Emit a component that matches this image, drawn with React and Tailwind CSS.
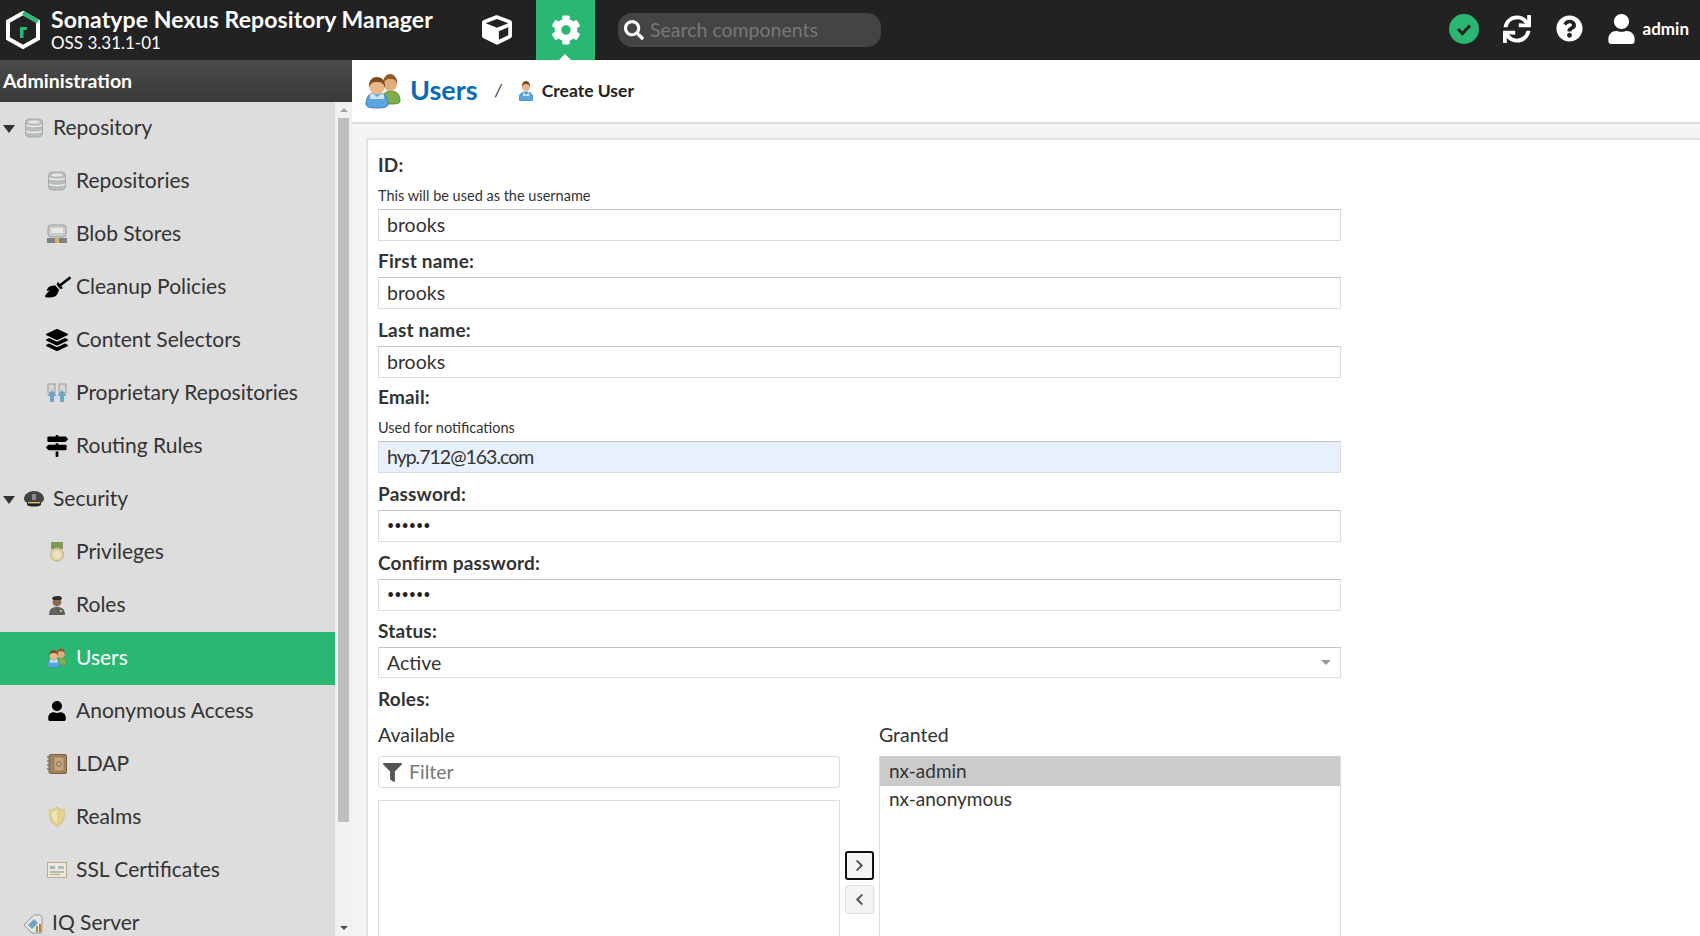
import React from "react";
import {
  FaCube,
  FaCog,
  FaSearch,
  FaSync,
  FaQuestionCircle,
  FaUser,
  FaBroom,
  FaLayerGroup,
  FaMapSigns,
  FaFilter,
  FaChevronRight,
  FaChevronLeft,
} from "react-icons/fa";

const Db = () => (
  <svg viewBox="0 0 18 20" className="w-[18px] h-[20px]">
    <rect x="0.5" y="1" width="17" height="18" rx="4" fill="#b9bcbc" stroke="#a5a8a8" />
    <path d="M1 7c3 2 13 2 16 0M1 13c3 2 13 2 16 0" stroke="#f0f0f0" strokeWidth="1.4" fill="none" />
    <ellipse cx="9" cy="4" rx="6" ry="1.6" fill="#e4e6e6" />
  </svg>
);

const BlobIcon = () => (
  <svg viewBox="0 0 20 20" className="w-[20px] h-[20px]">
    <rect x="1" y="1" width="18" height="12" rx="3" fill="#c9cbcb" stroke="#9a9d9d" />
    <rect x="4" y="4" width="12" height="5" fill="#e6e7e7" />
    <rect x="0" y="14" width="20" height="5" fill="#7d8080" />
    <rect x="8" y="14" width="4" height="5" fill="#d9b26a" />
  </svg>
);

const ProprietaryIcon = () => (
  <svg viewBox="0 0 20 20" className="w-[20px] h-[20px]">
    <rect x="1" y="1" width="7" height="9" fill="#d5d5d5" stroke="#9a9a9a" />
    <rect x="12" y="1" width="7" height="9" fill="#d5d5d5" stroke="#9a9a9a" />
    <path d="M5 7l4.500 6h-2.500v6h-4v-6H0.500z" fill="#6fa3c4" />
    <path d="M15 7l4.500 6h-2.500v6h-4v-6h-2.500z" fill="#6fa3c4" />
  </svg>
);

const CapIcon = () => (
  <svg viewBox="0 0 20 16" className="w-[20px] h-[16px]">
    <path d="M0 8c0-5 5-8 10-8s10 3 10 8c0 3-4 5-10 5S0 11 0 8z" fill="#444" />
    <rect x="8" y="3" width="4" height="6" rx="1" fill="#8d8d8d" />
    <path d="M3 12h14v2c-3 2-11 2-14 0z" fill="#1e1e1e" />
    <rect x="4" y="11" width="12" height="1.4" fill="#e0c36c" />
  </svg>
);

const MedalIcon = () => (
  <svg viewBox="0 0 14 20" className="w-[14px] h-[20px]">
    <rect x="1" y="0" width="12" height="7" fill="#7d9a55" />
    <circle cx="7" cy="12.5" r="6.5" fill="#e2d6a6" stroke="#bdae78" />
    <circle cx="7" cy="12.5" r="3.6" fill="#ece4c4" />
  </svg>
);

const RoleIcon = () => (
  <svg viewBox="0 0 16 20" className="w-[16px] h-[20px]">
    <path d="M0 20c0-6 3-8 8-8s8 2 8 8z" fill="#5f6160" />
    <circle cx="8" cy="7" r="4.4" fill="#8a6a4f" />
    <path d="M3 3c1-2 9-3 10 0l-1 2H4z" fill="#2d2d2d" />
    <rect x="11" y="15" width="2" height="2" fill="#d9c06a" />
  </svg>
);

const UsersIcon = ({ size = 20 }) => (
  <svg viewBox="0 0 36 36" style={{ width: size, height: size }}>
    <path d="M17 28c0-7 4-10 9-10s9 3 9 10c0 2-2 3-9 3s-9-1-9-3z" fill="#7fae4a" stroke="#5f8a35" />
    <circle cx="25" cy="11" r="7" fill="#e0ad7d" />
    <path d="M18 11c0-7 4-10 7-10s8 3 7 10c-1-4-3-5-7-5s-6 2-7 5z" fill="#8d5a2c" />
    <path d="M1 31c0-8 5-12 11-12s11 4 11 12c0 3-3 4-11 4S1 34 1 31z" fill="#5ba4e0" stroke="#3f80bb" />
    <circle cx="12" cy="14" r="7.5" fill="#eab78a" />
    <path d="M4 15c-1-8 4-11 8-11s9 3 8 11c-1-5-4-6-8-6s-7 1-8 6z" fill="#7d4a22" />
    <path d="M7 20l5 4 5-4 2 2v4H5v-4z" fill="#cfe4f5" />
  </svg>
);

const UserIcon = () => (
  <svg viewBox="0 0 14 20" className="w-[14px] h-[20px]">
    <path d="M0 19c0-6 2-8 7-8s7 2 7 8c0 1-14 1-14 0z" fill="#5ba4e0" stroke="#3f80bb" strokeWidth="0.8" />
    <circle cx="7" cy="6" r="4" fill="#eab78a" />
    <path d="M3 6c-.5-4 2-6 4-6s4.500 2 4 6c-.5-2-2-3-4-3S3.500 4 3 6z" fill="#7d4a22" />
    <path d="M4 11l3 3 3-3v4H4z" fill="#cfe4f5" />
  </svg>
);

const LdapIcon = () => (
  <svg viewBox="0 0 20 20" className="w-[20px] h-[20px]">
    <rect x="2" y="0.500" width="17.500" height="19" rx="1.500" fill="#a5825a" stroke="#7f6040" />
    <rect x="7" y="3" width="10" height="14" rx="1" fill="#c3a680" stroke="#8f7150" strokeWidth="0.6" />
    <circle cx="12" cy="10" r="2.500" fill="none" stroke="#8f7150" />
    <path d="M0 3h4M0 7h4M0 11h4M0 15h4" stroke="#777" strokeWidth="1.300" />
  </svg>
);

const RealmIcon = () => (
  <svg viewBox="0 0 16 20" className="w-[16px] h-[20px]">
    <path d="M8 0c2 2 5 3 8 3 0 8-2 13-8 17C2 16 0 11 0 3c3 0 6-1 8-3z" fill="#e6d28f" stroke="#bcae7a" strokeWidth="0.6" />
    <path d="M8 3v14c-3-3-5-6-5-11 2 0 3-1 5-3z" fill="#f1e6b9" />
  </svg>
);

const SslIcon = () => (
  <svg viewBox="0 0 20 16" className="w-[20px] h-[16px]">
    <rect x="0.500" y="0.500" width="19" height="15" fill="#eee8d8" stroke="#b9ab90" />
    <rect x="3" y="4" width="5" height="3" fill="#9fb5bf" />
    <rect x="11" y="4" width="6" height="3" fill="#a8bcc6" />
    <path d="M3 10h14" stroke="#7d8f98" />
    <rect x="3" y="12" width="10" height="1" fill="#b9ab90" />
  </svg>
);

const IqIcon = () => (
  <svg viewBox="0 0 20 20" className="w-[20px] h-[20px]">
    <path d="M1 11L11 1h6l2 2v15l-1 1H9z" fill="#e6e6e6" stroke="#9a9a9a" />
    <path d="M5 11l6-6 4 4-6 6z" fill="#6fa3c4" />
    <rect x="13" y="12" width="2" height="6" fill="#7da34f" />
    <rect x="16" y="10" width="2" height="8" fill="#c9743c" />
  </svg>
);

const Logo = () => (
  <svg viewBox="0 0 36 40" className="w-[36px] h-[40px]">
    <path d="M18 3L33 11.500V28.500L18 37L3 28.500V11.500Z" fill="none" stroke="#fff" strokeWidth="4" />
    <path d="M18 3L33 11.500" fill="none" stroke="#2ab673" strokeWidth="4" />
    <path d="M15 28V17h7v3h-3.500v8z" fill="#2ab673" />
  </svg>
);

const navItems = [
  { label: "Repository", icon: <Db />, caret: true },
  { label: "Repositories", icon: <Db /> },
  { label: "Blob Stores", icon: <BlobIcon /> },
  { label: "Cleanup Policies", icon: <FaBroom className="shrink-0 w-[26px] h-[26px] text-black ml-[2px]" /> },
  { label: "Content Selectors", icon: <FaLayerGroup className="w-[22px] h-[22px] text-black" /> },
  { label: "Proprietary Repositories", icon: <ProprietaryIcon /> },
  { label: "Routing Rules", icon: <FaMapSigns className="w-[22px] h-[22px] text-black" /> },
  { label: "Security", icon: <CapIcon />, caret: true },
  { label: "Privileges", icon: <MedalIcon /> },
  { label: "Roles", icon: <RoleIcon /> },
  { label: "Users", icon: <UsersIcon />, active: true },
  { label: "Anonymous Access", icon: <FaUser className="w-[20px] h-[20px] text-black" /> },
  { label: "LDAP", icon: <LdapIcon /> },
  { label: "Realms", icon: <RealmIcon /> },
  { label: "SSL Certificates", icon: <SslIcon /> },
  { label: "IQ Server", icon: <IqIcon />, top: true },
];

function NavRow({ item }) {
  if (item.caret) {
    return (
      <div className="flex items-center h-[53px] shrink-0 pl-[3px]">
        <span className="w-0 h-0 border-l-[6px] border-r-[6px] border-t-[8px] border-l-transparent border-r-transparent border-t-[#333]" />
        <span className="w-[30px] ml-[4px] pb-[1px] flex justify-center">{item.icon}</span>
        <span className="ml-[4px] pb-[3px] text-[#333]">{item.label}</span>
      </div>
    );
  }
  if (item.top) {
    return (
      <div className="flex items-center h-[53px] shrink-0 pl-[22px]">
        <span className="w-[22px] flex justify-center">{item.icon}</span>
        <span className="ml-[8px] pb-[3px] text-[#333]">{item.label}</span>
      </div>
    );
  }
  return (
    <div className={`flex items-center h-[53px] shrink-0 pl-[46px] ${item.active ? "bg-[#2ab673] text-white" : "text-[#333]"}`}>
      <span className="w-[22px] pb-[1px] flex justify-center">{item.icon}</span>
      <span className="ml-[8px] pb-[3px]">{item.label}</span>
    </div>
  );
}

function Sidebar() {
  return (
    <div className="w-[352px] shrink-0 flex flex-col bg-[#ddd]">
      <div className="h-[42px] shrink-0 flex items-center pl-[3px] font-bold text-[19.5px] text-white bg-gradient-to-b from-[#4a4a4a] to-[#3a3a3a]">
        Administration
      </div>
      <div className="flex-1 flex min-h-0 overflow-hidden">
        <div className="w-[335px] flex flex-col text-[21px]">
          {navItems.map((item) => (
            <NavRow key={item.label} item={item} />
          ))}
        </div>
        <div className="w-[17px] ml-auto flex flex-col bg-[#f1f1f1]">
          <div className="h-[16px] flex items-center justify-center">
            <span className="w-0 h-0 border-l-[4px] border-r-[4px] border-b-[4px] border-l-transparent border-r-transparent border-b-[#a3a3a3]" />
          </div>
          <div className="h-[704px] mx-[3px] bg-[#bfbfbf]" />
          <div className="flex-1 flex items-end justify-center pb-[6px]">
            <span className="w-0 h-0 border-l-[4px] border-r-[4px] border-t-[4px] border-l-transparent border-r-transparent border-t-[#505050]" />
          </div>
        </div>
      </div>
    </div>
  );
}

const labelClass = "font-bold text-[#333] text-[19px] tracking-[0.2px] leading-[22px]";

function Field({ label, help, value, className = "", mt, autofill }) {
  return (
    <div className={mt}>
      <div className={labelClass}>{label}</div>
      {help && <div className="text-[14.5px] text-[#333] leading-[18px] mt-[11px] mb-[4px]">{help}</div>}
      <div
        className={`h-[32px] flex items-center pl-[8px] text-[19.5px] text-[#333] border border-[#ddd] border-t-[#c4c4c4] ${
          autofill ? "bg-[#e8f0fe]" : "bg-white"
        } ${help ? "" : "mt-[5px]"} ${className}`}
      >
        {value}
      </div>
    </div>
  );
}

const Dots = () => <span className="text-[12.5px] text-[#222]">••••••</span>;

export default function App() {
  return (
    <div className="w-[1700px] h-[936px] flex flex-col overflow-hidden font-['Lato',sans-serif] bg-white">
      <header className="h-[60px] shrink-0 flex items-center bg-[#222] text-white">
        <div className="ml-[5px]">
          <Logo />
        </div>
        <div className="ml-[10px] w-[426px]">
          <div className="text-[23px] tracking-[0.1px] font-bold leading-[26px] -mt-[1px]">Sonatype Nexus Repository Manager</div>
          <div className="text-[17px] leading-[20px] mt-[1px]">OSS 3.31.1-01</div>
        </div>
        <FaCube className="w-[30px] h-[30px] ml-[5px]" />
        <div className="relative ml-[24px] w-[59px] h-[60px] bg-[#2ab673] flex items-center justify-center">
          <FaCog className="w-[30px] h-[30px]" />
          <span className="absolute bottom-0 left-[23px] w-0 h-0 border-l-[6px] border-r-[6px] border-b-[6px] border-l-transparent border-r-transparent border-b-white" />
        </div>
        <div className="ml-[23px] w-[263px] h-[34px] rounded-[14px] bg-[#444] flex items-center pl-[6px]">
          <FaSearch className="w-[20px] h-[20px]" />
          <span className="ml-[6px] text-[19.5px] text-[#777]">Search components</span>
        </div>
        <div className="ml-auto flex items-center pb-[3px]">
          <span className="w-[30px] h-[30px] rounded-full bg-[#2ab673] flex items-center justify-center">
            <svg viewBox="0 0 20 20" className="w-[20px] h-[20px]">
              <path d="M4 10l4.500 4.500L16 6.500" fill="none" stroke="#222" strokeWidth="3" />
            </svg>
          </span>
          <FaSync className="ml-[24px] w-[28px] h-[28px]" />
          <FaQuestionCircle className="ml-[25px] w-[27px] h-[27px]" />
          <FaUser className="ml-[25px] w-[27px] h-[30px]" />
          <span className="ml-[8px] mr-[11px] text-[17px] font-bold">admin</span>
        </div>
      </header>
      <div className="flex-1 flex min-h-0">
        <Sidebar />
        <main className="flex-1 min-w-0 flex flex-col bg-[#f4f4f4]">
          <div className="h-[64px] shrink-0 bg-white border-b-2 border-[#ddd] flex items-center pl-[13px]">
            <UsersIcon size={36} />
            <span className="ml-[9px] pb-[2px] text-[27px] font-bold text-[#0b6bb8]">Users</span>
            <span className="ml-[17px] text-[17px] italic text-[#333]">/</span>
            <span className="ml-[17px]"><UserIcon /></span>
            <span className="ml-[9px] text-[17.5px] font-bold text-[#222]">Create User</span>
          </div>
          <div className="flex-1 min-h-0 mt-[14px] ml-[14px] bg-white border-l-2 border-t-2 border-[#e3e3e3] pl-[10px] pt-[14px]">
            <div className="w-[963px]">
              <Field label="ID:" help="This will be used as the username" value="brooks" />
              <Field label="First name:" value="brooks" mt="mt-[9px]" />
              <Field label="Last name:" value="brooks" mt="mt-[10px]" />
              <Field
                label="Email:"
                help="Used for notifications"
                value={<span className="tracking-[-1px]">hyp.712@163.com</span>}
                mt="mt-[8px]"
                autofill
              />
              <Field label="Password:" value={<Dots />} mt="mt-[10px]" />
              <Field label="Confirm password:" value={<Dots />} mt="mt-[10px]" />
              <Field
                label="Status:"
                value={
                  <div className="flex-1 flex items-center justify-between pr-[9px]">
                    <span>Active</span>
                    <span className="w-0 h-0 border-l-[5px] border-r-[5px] border-t-[5px] border-l-transparent border-r-transparent border-t-[#999]" />
                  </div>
                }
                className="!h-[31px]"
                mt="mt-[9px]"
              />
              <div className={`${labelClass} mt-[10px]`}>Roles:</div>
              <div className="flex mt-[13px]">
                <div className="w-[462px]">
                  <div className="text-[19.5px] text-[#333] leading-[24px]">Available</div>
                  <div className="mt-[9px] h-[32px] border border-[#ddd] rounded-[3px] flex items-center pl-[4px] text-[19.5px] text-[#777]">
                    <FaFilter className="w-[19px] h-[19px] text-[#555]" />
                    <span className="ml-[7px]">Filter</span>
                  </div>
                  <div className="mt-[12px] h-[200px] border border-[#ddd]" />
                </div>
                <div className="w-[39px] pl-[5px] pt-[128px] flex flex-col gap-[5px]">
                  <button className="w-[29px] h-[29px] rounded-[3px] border-2 border-[#111] bg-[#f4f4f4] flex items-center justify-center">
                    <FaChevronRight className="w-[13px] h-[13px] text-[#555]" />
                  </button>
                  <button className="w-[29px] h-[29px] rounded-[3px] border border-[#ddd] bg-[#f4f4f4] flex items-center justify-center">
                    <FaChevronLeft className="w-[13px] h-[13px] text-[#555]" />
                  </button>
                </div>
                <div className="w-[462px]">
                  <div className="text-[19.5px] text-[#333] leading-[24px]">Granted</div>
                  <div className="mt-[9px] h-[244px] border border-[#ddd] border-t-0 text-[19px] text-[#333]">
                    <div className="h-[30px] bg-[#cbcbcb] flex items-center pl-[9px]">nx-admin</div>
                    <div className="h-[26px] flex items-center pl-[9px]">nx-anonymous</div>
                  </div>
                </div>
              </div>
            </div>
          </div>
        </main>
      </div>
    </div>
  );
}
